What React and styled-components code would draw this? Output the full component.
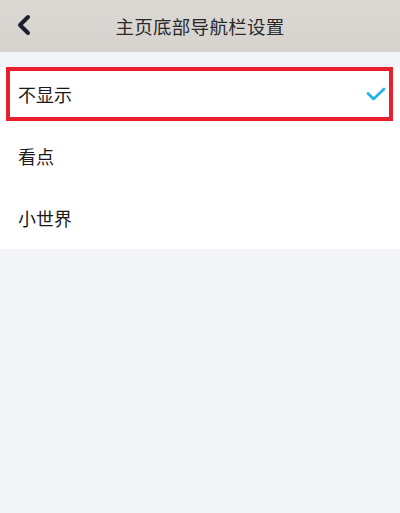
import React from "react";
import styled, { createGlobalStyle } from "styled-components";

const GlobalStyle = createGlobalStyle`
  html, body {
    margin: 0;
    padding: 0;
    background: #f3f4f8;
    font-family: "Noto Sans CJK SC", "Noto Sans", sans-serif;
  }
`;

const items = [
  { label: "不显示", selected: true },
  { label: "看点" },
  { label: "小世界" },
];

const App = () => {
  return (
    <Page>
      <GlobalStyle />
      <Header>
        <BackButton aria-label="返回">
          <svg width="16" height="22" viewBox="0 0 16 22">
            <path
              d="M12 3 L4 11 L12 19"
              fill="none"
              stroke="#1c1f2e"
              strokeWidth="4"
              strokeLinecap="round"
              strokeLinejoin="round"
            />
          </svg>
        </BackButton>
        <Title>主页底部导航栏设置</Title>
      </Header>
      <List>
        {items.map((item) => (
          <Row key={item.label} $selected={item.selected}>
            <Label>{item.label}</Label>
            {item.selected && (
              <svg width="20" height="14" viewBox="0 0 20 14">
                <path
                  d="M2 6.5 L7.5 12 L18 2"
                  fill="none"
                  stroke="#27b3ea"
                  strokeWidth="2.8"
                  strokeLinecap="round"
                  strokeLinejoin="round"
                />
              </svg>
            )}
          </Row>
        ))}
      </List>
    </Page>
  );
};

export default App;

const Page = styled.div`
  width: 400px;
  min-height: 513px;
  background: #f3f4f8;
`;

const Header = styled.div`
  height: 52px;
  display: flex;
  align-items: center;
  justify-content: center;
  position: relative;
  background: linear-gradient(180deg, #dcd8d4 0%, #d6d2ce 100%);
`;

const BackButton = styled.div`
  position: absolute;
  left: 16px;
  top: 14px;
  display: flex;
`;

const Title = styled.div`
  font-size: 18.5px;
  color: #2a2929;
  letter-spacing: 0.3px;
`;

const List = styled.div`
  margin-top: 15px;
  background: #ffffff;
  padding: 0 7px 0 6px;
  display: flex;
  flex-direction: column;
`;

const Row = styled.div`
  box-sizing: border-box;
  display: flex;
  align-items: center;
  justify-content: space-between;
  padding: 0 3px 0 8px;
  border: 4px solid ${(p) => (p.$selected ? "#e8202e" : "transparent")};
  height: ${(p) => (p.$selected ? "54px" : "62px")};
  margin-bottom: ${(p) => (p.$selected ? "4px" : "0")};
`;

const Label = styled.span`
  font-size: 18px;
  color: #1a1a1a;
`;
